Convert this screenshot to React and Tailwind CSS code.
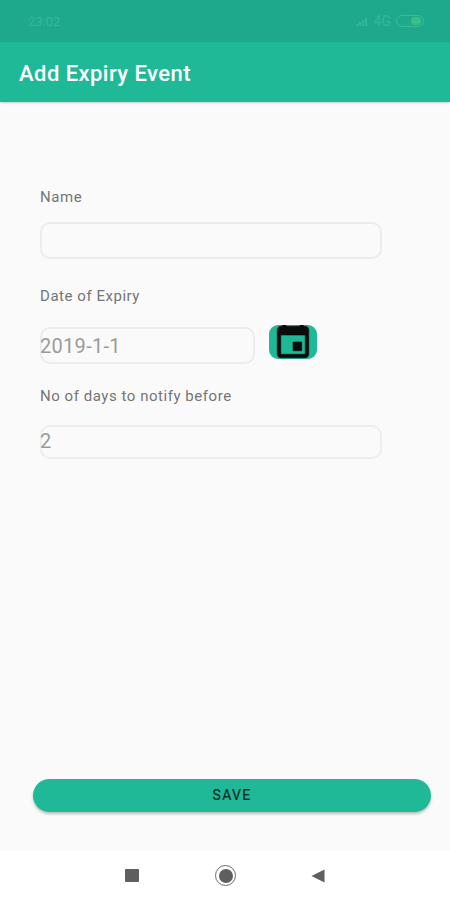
export default function App() {
  return (
    <div className="flex flex-col h-[900px] w-[450px] bg-[#fafafa] font-['Roboto',sans-serif] overflow-hidden">
      {/* Status bar */}
      <div className="h-[42px] bg-[#1fa98c] flex items-center justify-between pl-[28px] pr-[26px] text-[13px] text-[#35b79b] shrink-0">
        <span className="leading-none">23:02</span>
        <div className="flex items-center gap-[4px]">
          <svg width="14" height="9" viewBox="0 0 14 9" fill="#35b79b">
            <rect x="0" y="7" width="2" height="2" />
            <rect x="3" y="5" width="2" height="4" />
            <rect x="6" y="3" width="2" height="6" />
            <rect x="9" y="1" width="2" height="8" />
          </svg>
          <span className="leading-none text-[14px]">4G</span>
          <div className="ml-[1px] w-[28px] h-[12px] rounded-full border border-[#3cbaa0] flex items-center justify-end pr-[2px]">
            <div className="w-[10px] h-[8px] rounded-full bg-[#39c184]" />
          </div>
        </div>
      </div>

      {/* App bar */}
      <div className="h-[60px] bg-[#20b997] flex items-center pl-[19px] shrink-0 shadow-[0_1px_2px_rgba(0,0,0,0.2)] z-10">
        <h1 className="text-[22px] font-medium text-white tracking-[0.45px] mt-[2px]">Add Expiry Event</h1>
      </div>

      {/* Form */}
      <div className="flex-1 flex flex-col pl-[40px] pt-[86px]">
        <label className="text-[15px] leading-[18px] text-[#757575] tracking-[0.54px]">Name</label>
        <div className="mt-[16px] w-[342px] h-[37px] rounded-[10px] border-2 border-[#ececec] shrink-0" />

        <label className="mt-[28px] text-[15px] leading-[18px] text-[#757575] tracking-[0.54px]">Date of Expiry</label>
        <div className="mt-[20px] flex items-start gap-[14px] h-[38px]">
          <div className="mt-[2px] w-[215px] h-[37px] rounded-[10px] border-2 border-[#ececec] flex items-center text-[20px] text-[#9a9a9a] tracking-[0.3px] shrink-0">
            <span className="-ml-[2px]">2019-1-1</span>
          </div>
          <button className="w-[48px] h-[34px] rounded-[9px] bg-[#20b997] flex items-center justify-center overflow-hidden">
            <svg width="42" height="42" viewBox="0 0 24 24" fill="#0c0c0c" stroke="#0c0c0c" strokeWidth="0.35" className="shrink-0">
              <path d="M17 12h-5v5h5v-5zM16 1v2H8V1H6v2H5c-1.11 0-1.99.9-1.99 2L3 19c0 1.1.89 2 2 2h14c1.1 0 2-.9 2-2V5c0-1.1-.9-2-2-2h-1V1h-2zm3 18H5V8h14v11z" />
            </svg>
          </button>
        </div>

        <label className="mt-[24px] text-[15px] leading-[18px] text-[#757575] tracking-[0.54px]">No of days to notify before</label>
        <div className="mt-[20px] w-[342px] h-[34px] rounded-[10px] border-2 border-[#eeeeee] flex items-center text-[20px] text-[#9a9a9a] shrink-0">
          <span className="-ml-[2px] -mt-[2px]">2</span>
        </div>
      </div>

      {/* Save */}
      <div className="pl-[33px] pb-[39px] shrink-0">
        <button className="w-[398px] h-[33px] rounded-full bg-[#20b997] shadow-[0_2px_3px_rgba(0,0,0,0.25)] text-[14px] text-[#0c2a24] tracking-[1.3px] [-webkit-text-stroke:0.2px_#0c2a24]">
          SAVE
        </button>
      </div>

      {/* Nav bar */}
      <div className="h-[49px] bg-white flex items-center shrink-0 pl-[125px] gap-[76px]">
        <div className="w-[14px] h-[13px] bg-[#5f5f5f] rounded-[1px]" />
        <div className="w-[21px] h-[21px] rounded-full border-[1.5px] border-[#6a6a6a] flex items-center justify-center">
          <div className="w-[14px] h-[14px] rounded-full bg-[#5f5f5f]" />
        </div>
        <svg width="14" height="14" viewBox="0 0 14 14" fill="#5f5f5f" className="-ml-[1px]">
          <path d="M0.5 7 L13.5 0.5 V13.5 Z" />
        </svg>
      </div>
    </div>
  );
}
